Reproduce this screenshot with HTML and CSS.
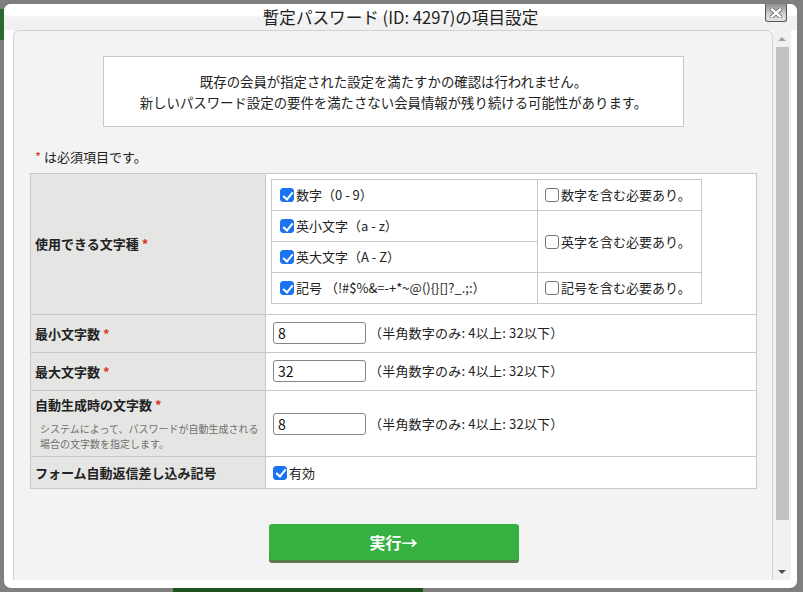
FILE: index.html
```html
<!DOCTYPE html>
<html lang="ja">
<head>
<meta charset="utf-8">
<title>暫定パスワードの項目設定</title>
<link rel="stylesheet" href="styles.css">
</head>
<body>
<div class="bg-top"></div>
<div class="bg-bottom"></div>
<div class="modal">
  <div class="titlebar">
    <span class="title">暫定パスワード (ID: 4297)の項目設定</span>
    <span class="close">
      <svg width="12" height="10" viewBox="0 0 12 10"><path d="M2 1.5L10 8.5M10 1.5L2 8.5" stroke="#6a6a6a" stroke-width="4.2" stroke-linecap="square"/><path d="M2 1.5L10 8.5M10 1.5L2 8.5" stroke="#fff" stroke-width="2.4" stroke-linecap="square"/></svg>
    </span>
  </div>
  <div class="body">
    <div class="panel">
      <div class="notice">既存の会員が指定された設定を満たすかの確認は行われません。<br>新しいパスワード設定の要件を満たさない会員情報が残り続ける可能性があります。</div>
      <p class="req"><span class="ast">*</span> は必須項目です。</p>
      <table class="form">
        <tr class="r1">
          <th>使用できる文字種 <span class="ast">*</span></th>
          <td class="nest-cell">
            <table class="nest">
              <tr>
                <td class="c1"><label class="chk"><input type="checkbox" checked>数字（0 - 9）</label></td>
                <td class="c2"><label class="chk"><input type="checkbox">数字を含む必要あり。</label></td>
              </tr>
              <tr>
                <td class="c1"><label class="chk"><input type="checkbox" checked>英小文字（a - z）</label></td>
                <td class="c2" rowspan="2"><label class="chk"><input type="checkbox">英字を含む必要あり。</label></td>
              </tr>
              <tr>
                <td class="c1"><label class="chk"><input type="checkbox" checked>英大文字（A - Z）</label></td>
              </tr>
              <tr>
                <td class="c1"><label class="chk"><input type="checkbox" checked>記号 （!#$%&amp;=-+*~@(){}[]?_.;:）</label></td>
                <td class="c2"><label class="chk"><input type="checkbox">記号を含む必要あり。</label></td>
              </tr>
            </table>
          </td>
        </tr>
        <tr class="r2">
          <th>最小文字数 <span class="ast">*</span></th>
          <td><div class="val"><input class="num" type="text" value="8"><span>（半角数字のみ: 4以上: 32以下）</span></div></td>
        </tr>
        <tr class="r2">
          <th>最大文字数 <span class="ast">*</span></th>
          <td><div class="val"><input class="num" type="text" value="32"><span>（半角数字のみ: 4以上: 32以下）</span></div></td>
        </tr>
        <tr class="r4">
          <th>
            <div class="lbl">自動生成時の文字数 <span class="ast">*</span></div>
            <div class="desc">システムによって、パスワードが自動生成される<br>場合の文字数を指定します。</div>
          </th>
          <td><div class="val"><input class="num" type="text" value="8"><span>（半角数字のみ: 4以上: 32以下）</span></div></td>
        </tr>
        <tr class="r5">
          <th>フォーム自動返信差し込み記号</th>
          <td><label class="chk"><input type="checkbox" checked>有効</label></td>
        </tr>
      </table>
      <div class="actions"><button class="submit" type="button">実行→</button></div>
    </div>
    <div class="scroll">
      <div class="sb-up"><span class="tri-up"></span></div>
      <div class="sb-thumb"></div>
      <div class="sb-gap"></div>
      <div class="sb-down"><span class="tri-down"></span></div>
    </div>
  </div>
</div>
</body>
</html>
```
FILE: styles.css
```css
html, body {
  margin: 0;
  height: 592px;
  overflow: hidden;
}
body {
  position: relative;
  background: #7f7f7f;
  padding: 4px 0 0 4px;
  box-sizing: border-box;
  font-family: "Noto Sans CJK JP", "Noto Sans", sans-serif;
  color: #222;
  font-size: 13px;
}
.bg-top {
  position: absolute;
  left: 0;
  top: 9px;
  width: 5px;
  height: 31px;
  background: #2a6a2a;
}
.bg-bottom {
  position: absolute;
  left: 173px;
  top: 587px;
  width: 250px;
  height: 5px;
  background: #1e541e;
}
.modal {
  position: relative;
  width: 793px;
  height: 584px;
  background: #fff;
  border-radius: 7px;
  display: flex;
  flex-direction: column;
}
.titlebar {
  height: 26px;
  flex: none;
  display: flex;
  align-items: center;
  justify-content: center;
  background: linear-gradient(#ffffff 0%, #ffffff 42%, #f2f2f2 50%, #f0f0f0 100%);
  border-radius: 7px 7px 0 0;
  font-size: 16.6px;
  color: #1e1e1e;
}
.close {
  position: absolute;
  right: 10px;
  top: 0;
  width: 20px;
  height: 17px;
  border: 1px solid #555;
  border-top: none;
  border-radius: 0 0 3px 3px;
  background: linear-gradient(#8e8e8e, #cfcfcf 60%, #e4e4e4);
  display: flex;
  align-items: center;
  justify-content: center;
}
.body {
  flex: 1;
  display: flex;
  padding: 0 6px 8px 9px;
}
.panel {
  width: 760px;
  box-sizing: border-box;
  border: 1px solid #d2d2d2;
  border-bottom: none;
  border-radius: 6px 6px 0 0;
  background: #f3f3f3;
  padding: 25px 15px 0 16px;
}
.notice {
  width: 581px;
  height: 71px;
  box-sizing: border-box;
  margin: 0 auto;
  background: #fff;
  border: 1px solid #c8c8c8;
  display: flex;
  align-items: center;
  justify-content: center;
  text-align: center;
  line-height: 21px;
  font-size: 13.4px;
}
.req {
  margin: 21px 0 7px 5px;
  line-height: 18px;
}
.ast {
  color: #d8341c;
}
.form {
  width: 727px;
  border-collapse: collapse;
  background: #fff;
}
.form > tbody > tr > th,
.form > tbody > tr > td {
  border: 1px solid #c8c8c8;
  padding: 0;
}
.form th {
  width: 226px;
  background: #e5e6e3;
  text-align: left;
  font-weight: bold;
  padding: 0 4px !important;
  vertical-align: middle;
  line-height: 20px;
}
.form .nest-cell {
  padding: 5px 6px 10px 5px;
  vertical-align: top;
}
.nest {
  border-collapse: collapse;
  width: 431px;
}
.nest td {
  border: 1px solid #c8c8c8;
  padding: 5px 4px 5px 8px;
  line-height: 20px;
  height: 20px;
  vertical-align: middle;
}
.nest td.c1 {
  width: 253px;
}
.nest td.c2 {
  padding-left: 7px;
}
.chk {
  display: flex;
  align-items: center;
  white-space: nowrap;
}
.chk input {
  -webkit-appearance: none;
  appearance: none;
  position: relative;
  margin: 0 2px 0 0;
  width: 14px;
  height: 14px;
  box-sizing: border-box;
  border: 1px solid #767676;
  border-radius: 3px;
  background: #fff;
  flex: none;
}
.chk input:checked {
  border-color: #1a73f0;
  background: #1a73f0;
}
.chk input:checked::after {
  content: "";
  position: absolute;
  left: 3.5px;
  top: 0.5px;
  width: 4px;
  height: 8px;
  border: solid #fff;
  border-width: 0 2.2px 2.2px 0;
  transform: rotate(40deg);
}
.r2 td {
  padding: 7px 7px 8px !important;
}
.val {
  display: flex;
  align-items: center;
  gap: 3px;
  line-height: 22px;
}
.val span {
  letter-spacing: 0.2px;
}
.num {
  width: 93px;
  height: 22px;
  box-sizing: border-box;
  border: 1px solid #858585;
  border-radius: 3px;
  padding: 0 4px;
  font-family: "Noto Sans CJK JP", sans-serif;
  font-size: 14px;
  color: #111;
  background: #fff;
  margin: 0;
}
.r4 th {
  padding: 4px 4px 5px !important;
  vertical-align: top;
}
.r4 td {
  padding: 0 7px !important;
  vertical-align: middle;
}
.lbl {
  line-height: 20px;
}
.desc {
  margin-top: 6px;
  padding-left: 5px;
  font-size: 10px;
  line-height: 15px;
  font-weight: normal;
  color: #6f6f6f;
}
.r5 th {
  padding: 6px 4px 5px !important;
}
.r5 td {
  padding: 0 7px !important;
}
.actions {
  display: flex;
  justify-content: center;
  margin-top: 35px;
}
.submit {
  width: 250px;
  height: 36px;
  border: none;
  border-radius: 3px;
  background: #36b041;
  box-shadow: 0 3px 0 #5a7a4e;
  color: #fff;
  font-family: "Noto Sans CJK JP", sans-serif;
  font-size: 16px;
  font-weight: bold;
  padding: 0;
}
.scroll {
  width: 18px;
  background: #f1f1f1;
  display: flex;
  flex-direction: column;
}
.sb-up, .sb-down {
  height: 17px;
  flex: none;
  display: flex;
  align-items: center;
  justify-content: center;
}
.sb-thumb {
  height: 473px;
  flex: none;
  margin: 0 2px 0 3px;
  background: #c1c1c1;
}
.sb-gap {
  flex: 1;
}
.tri-up {
  width: 0;
  height: 0;
  border-left: 4px solid transparent;
  border-right: 4px solid transparent;
  border-bottom: 4px solid #a3a3a3;
}
.tri-down {
  width: 0;
  height: 0;
  border-left: 4px solid transparent;
  border-right: 4px solid transparent;
  border-top: 4px solid #505050;
}
```
